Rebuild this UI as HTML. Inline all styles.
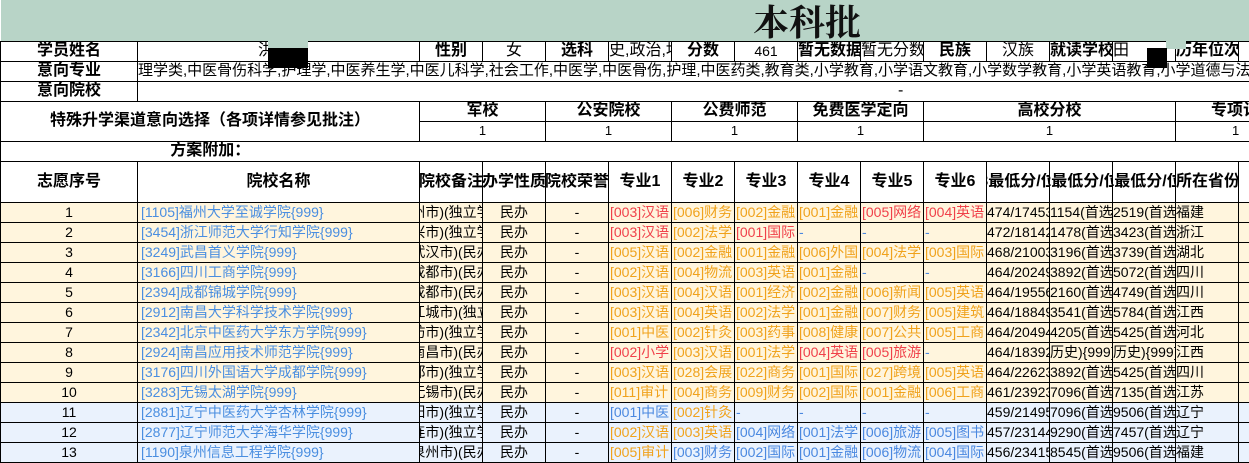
<!DOCTYPE html>
<html><head><meta charset="utf-8"><style>
*{margin:0;padding:0;box-sizing:border-box}
body{width:1249px;height:462px;overflow:hidden;background:#fff;font-family:"Liberation Sans","Noto Sans CJK SC",sans-serif;position:relative}
table{border-collapse:collapse;table-layout:fixed;width:1249px;position:absolute;left:0;top:0}
td{border:1px solid #000;height:20px;overflow:hidden;white-space:nowrap;font-size:13px;text-align:center;padding:0;line-height:18px}
.b{font-weight:bold;font-size:15px}
.c{display:flex;justify-content:center;overflow:hidden;white-space:nowrap}
.l{text-align:left}
.y td{background:#fff5dd}
.u td{background:#eaf2fd}
.r{color:#f0414a}.o{color:#f0a21c}.bl{color:#4a88e0}
.n{color:#4a8ee0;text-align:left;padding-left:3px;font-size:14px}
.m td{font-size:14px}
.m td.f{font-size:14px;text-align:left;padding-left:1px}
.h td{font-size:16px}
</style></head><body>
<table>
<colgroup><col style="width:137px"><col style="width:282px"><col span="13" style="width:63px"><col style="width:11px"></colgroup>
<tr><td colspan="16" style="height:41px;background:#b8d4c7;border:none;border-bottom:1px solid #000"></td></tr>
<tr class="h"><td class="b">学员姓名</td><td class="l" style="padding-left:120px">洪</td><td class="b">性别</td><td>女</td><td class="b">选科</td><td class="l">史,政治,地理</td><td class="b">分数</td><td style="font-size:14px">461</td><td class="b l">暂无数据</td><td class="l">暂无分数</td><td class="b">民族</td><td>汉族</td><td class="b l">就读学校</td><td class="l">田</td><td class="b l">历年位次</td><td></td></tr>
<tr class="h"><td class="b">意向专业</td><td colspan="15" class="l" style="font-size:15px">理学类,中医骨伤科学,护理学,中医养生学,中医儿科学,社会工作,中医学,中医骨伤,护理,中医药类,教育类,小学教育,小学语文教育,小学数学教育,小学英语教育,小学道德与法治</td></tr>
<tr class="h"><td class="b l" style="padding-left:36px">意向院校</td><td colspan="15" style="padding-left:760px;text-align:left">-</td></tr>
<tr class="h"><td colspan="2" rowspan="2" class="b">特殊升学渠道意向选择（各项详情参见批注）</td><td colspan="2" class="b">军校</td><td colspan="2" class="b">公安院校</td><td colspan="2" class="b">公费师范</td><td colspan="2" class="b">免费医学定向</td><td colspan="4" class="b">高校分校</td><td colspan="2" class="b" style="text-align:left;padding-left:35px">专项计划</td></tr>
<tr><td colspan="2">1</td><td colspan="2">1</td><td colspan="2">1</td><td colspan="2">1</td><td colspan="4">1</td><td colspan="2" style="text-align:left;padding-left:56px">1</td></tr>
<tr class="h"><td colspan="2" class="b" style="border-right:none">方案附加：</td><td colspan="14" style="border-left:none;border-right:none"></td></tr>
<tr class="h"><td class="b" style="height:41px">志愿序号</td><td class="b">院校名称</td><td class="b"><div class="c">院校备注</div></td><td class="b"><div class="c">办学性质</div></td><td class="b"><div class="c">院校荣誉</div></td><td class="b">专业1</td><td class="b">专业2</td><td class="b">专业3</td><td class="b">专业4</td><td class="b">专业5</td><td class="b">专业6</td><td class="b"><div class="c">3最低分/位</div></td><td class="b"><div class="c">2最低分/位</div></td><td class="b"><div class="c">1最低分/位</div></td><td class="b l">所在省份</td><td class="b"></td></tr>
<tr class="y m"><td>1</td><td class="n">[1105]福州大学至诚学院{999}</td><td><div class="c">州市)(独立学</div></td><td>民办</td><td>-</td><td class="f r">[003]汉语</td><td class="f o">[006]财务</td><td class="f o">[002]金融</td><td class="f o">[001]金融</td><td class="f r">[005]网络</td><td class="f r">[004]英语</td><td class="l">474/17453</td><td class="l">1154(首选</td><td class="l">2519(首选</td><td class="l">福建</td><td></td></tr>
<tr class="y m"><td>2</td><td class="n">[3454]浙江师范大学行知学院{999}</td><td><div class="c">兴市)(独立学</div></td><td>民办</td><td>-</td><td class="f r">[003]汉语</td><td class="f o">[002]法学</td><td class="f r">[001]国际</td><td class="f bl">-</td><td class="f bl">-</td><td class="f bl">-</td><td class="l">472/18142</td><td class="l">1478(首选</td><td class="l">3423(首选</td><td class="l">浙江</td><td></td></tr>
<tr class="y m"><td>3</td><td class="n">[3249]武昌首义学院{999}</td><td><div class="c">武汉市)(民办</div></td><td>民办</td><td>-</td><td class="f o">[005]汉语</td><td class="f o">[002]金融</td><td class="f o">[001]金融</td><td class="f o">[006]外国</td><td class="f o">[004]法学</td><td class="f o">[003]国际</td><td class="l">468/21003</td><td class="l">3196(首选</td><td class="l">3739(首选</td><td class="l">湖北</td><td></td></tr>
<tr class="y m"><td>4</td><td class="n">[3166]四川工商学院{999}</td><td><div class="c">成都市)(民办</div></td><td>民办</td><td>-</td><td class="f o">[002]汉语</td><td class="f o">[004]物流</td><td class="f o">[003]英语</td><td class="f o">[001]金融</td><td class="f bl">-</td><td class="f bl">-</td><td class="l">464/20249</td><td class="l">3892(首选</td><td class="l">5072(首选</td><td class="l">四川</td><td></td></tr>
<tr class="y m"><td>5</td><td class="n">[2394]成都锦城学院{999}</td><td><div class="c">成都市)(民办</div></td><td>民办</td><td>-</td><td class="f o">[003]汉语</td><td class="f o">[004]汉语</td><td class="f o">[001]经济</td><td class="f o">[002]金融</td><td class="f o">[006]新闻</td><td class="f o">[005]英语</td><td class="l">464/19556</td><td class="l">2160(首选</td><td class="l">4749(首选</td><td class="l">四川</td><td></td></tr>
<tr class="y m"><td>6</td><td class="n">[2912]南昌大学科学技术学院{999}</td><td><div class="c">江城市)(独立</div></td><td>民办</td><td>-</td><td class="f o">[003]汉语</td><td class="f o">[004]英语</td><td class="f o">[002]法学</td><td class="f o">[001]金融</td><td class="f o">[007]财务</td><td class="f o">[005]建筑</td><td class="l">464/18849</td><td class="l">3541(首选</td><td class="l">5784(首选</td><td class="l">江西</td><td></td></tr>
<tr class="y m"><td>7</td><td class="n">[2342]北京中医药大学东方学院{999}</td><td><div class="c">坊市)(独立学</div></td><td>民办</td><td>-</td><td class="f o">[001]中医</td><td class="f o">[002]针灸</td><td class="f o">[003]药事</td><td class="f o">[008]健康</td><td class="f o">[007]公共</td><td class="f o">[005]工商</td><td class="l">464/20494</td><td class="l">4205(首选</td><td class="l">5425(首选</td><td class="l">河北</td><td></td></tr>
<tr class="y m"><td>8</td><td class="n">[2924]南昌应用技术师范学院{999}</td><td><div class="c">南昌市)(民办</div></td><td>民办</td><td>-</td><td class="f r">[002]小学</td><td class="f o">[003]汉语</td><td class="f o">[001]法学</td><td class="f r">[004]英语</td><td class="f r">[005]旅游</td><td class="f bl">-</td><td class="l">464/18392</td><td class="l">历史){999}</td><td class="l">历史){999}</td><td class="l">江西</td><td></td></tr>
<tr class="y m"><td>9</td><td class="n">[3176]四川外国语大学成都学院{999}</td><td><div class="c">都市)(独立学</div></td><td>民办</td><td>-</td><td class="f o">[003]汉语</td><td class="f o">[028]会展</td><td class="f o">[022]商务</td><td class="f o">[001]国际</td><td class="f o">[027]跨境</td><td class="f o">[005]英语</td><td class="l">464/22623</td><td class="l">3892(首选</td><td class="l">5425(首选</td><td class="l">四川</td><td></td></tr>
<tr class="y m"><td>10</td><td class="n">[3283]无锡太湖学院{999}</td><td><div class="c">无锡市)(民办</div></td><td>民办</td><td>-</td><td class="f o">[011]审计</td><td class="f o">[004]商务</td><td class="f o">[009]财务</td><td class="f o">[002]国际</td><td class="f o">[001]金融</td><td class="f o">[006]工商</td><td class="l">461/23923</td><td class="l">7096(首选</td><td class="l">7135(首选</td><td class="l">江苏</td><td></td></tr>
<tr class="u m"><td>11</td><td class="n">[2881]辽宁中医药大学杏林学院{999}</td><td><div class="c">阳市)(独立学</div></td><td>民办</td><td>-</td><td class="f bl">[001]中医</td><td class="f o">[002]针灸</td><td class="f bl">-</td><td class="f bl">-</td><td class="f bl">-</td><td class="f bl">-</td><td class="l">459/21495</td><td class="l">7096(首选</td><td class="l">9506(首选</td><td class="l">辽宁</td><td></td></tr>
<tr class="u m"><td>12</td><td class="n">[2877]辽宁师范大学海华学院{999}</td><td><div class="c">连市)(独立学</div></td><td>民办</td><td>-</td><td class="f o">[002]汉语</td><td class="f o">[003]英语</td><td class="f bl">[004]网络</td><td class="f bl">[001]法学</td><td class="f bl">[006]旅游</td><td class="f bl">[005]图书</td><td class="l">457/23144</td><td class="l">9290(首选</td><td class="l">7457(首选</td><td class="l">辽宁</td><td></td></tr>
<tr class="u m"><td>13</td><td class="n">[1190]泉州信息工程学院{999}</td><td><div class="c">泉州市)(民办</div></td><td>民办</td><td>-</td><td class="f o">[005]审计</td><td class="f bl">[003]财务</td><td class="f bl">[002]国际</td><td class="f bl">[001]金融</td><td class="f bl">[006]物流</td><td class="f bl">[004]国际</td><td class="l">456/23415</td><td class="l">8545(首选</td><td class="l">9506(首选</td><td class="l">福建</td><td></td></tr>
</table>
<div style="position:absolute;left:753px;top:0;height:41px;line-height:41px;font-size:36px;font-weight:bold;font-family:'Noto Serif CJK SC',serif;color:#111">本科批</div>
<div style="position:absolute;left:268px;top:41px;width:40px;height:7px;background:#b8d4c7"></div>
<div style="position:absolute;left:268px;top:48px;width:40px;height:20px;background:#000"></div>
<div style="position:absolute;left:1166px;top:41px;width:20px;height:8px;background:#b8d4c7"></div>
<div style="position:absolute;left:1147px;top:48px;width:20px;height:20px;background:#000"></div>
</body></html>
